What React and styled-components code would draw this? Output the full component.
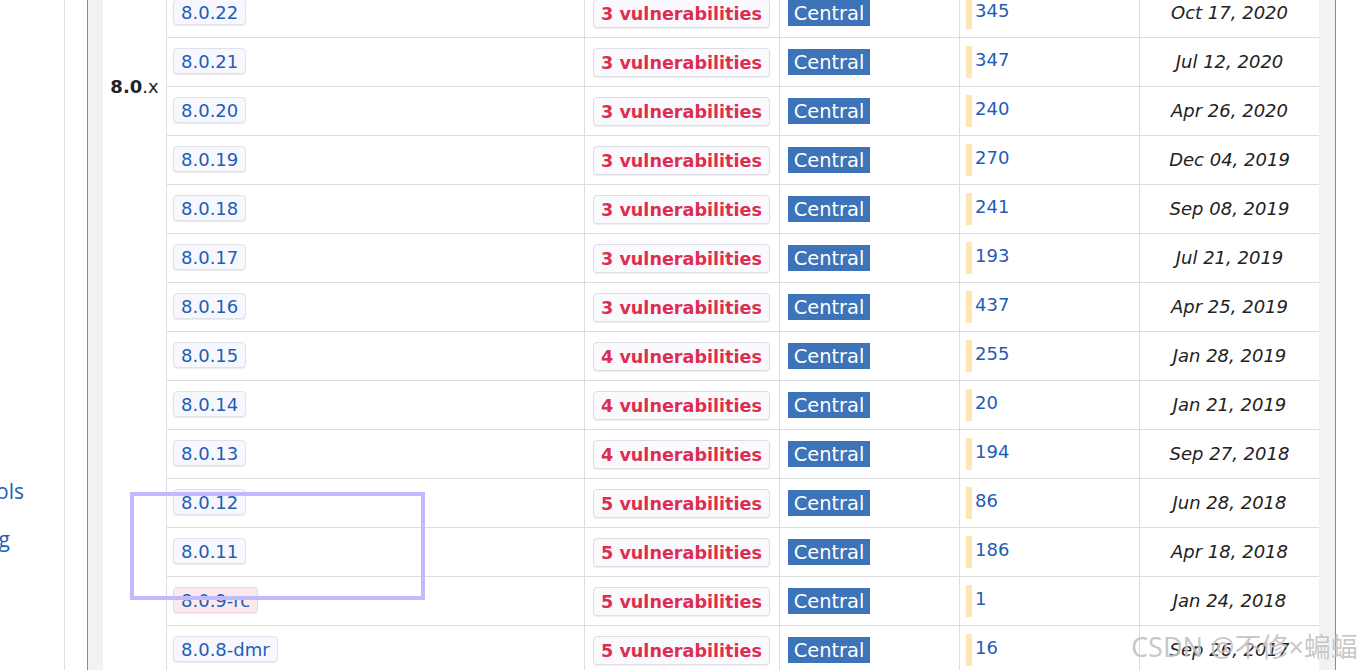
import React from "react";
import styled, { createGlobalStyle } from "styled-components";

const Global = createGlobalStyle`
  html, body { margin: 0; padding: 0; background: #fff; overflow: hidden; }
  body { font-family: "DejaVu Sans", Verdana, sans-serif; }
`;

const Page = styled.div`
  position: relative;
  display: flex;
  width: 1357px;
  height: 670px;
  overflow: hidden;
`;

const Sidebar = styled.nav`
  width: 64px;
  flex: none;
  border-right: 1px solid #e2e2e2;
  overflow: hidden;
  padding-top: 478px;
  display: flex;
  flex-direction: column;
  gap: 22px;
`;

const SideLink = styled.a`
  display: flex;
  justify-content: flex-end;
  width: ${(p) => p.$edge}px;
  white-space: nowrap;
  font-family: "Open Sans", "Noto Sans", sans-serif;
  font-size: 21px;
  line-height: 26px;
  color: #1f5db6;
  text-decoration: none;
`;

const Main = styled.main`
  margin-left: 22px;
  flex: none;
  background: #f2f2f2;
  border-left: 1px solid #8a8a8a;
  border-right: 1px solid #8a8a8a;
  padding: 0 16px 0 15px;
`;

const Grid = styled.div`
  margin-top: -11px;
  display: grid;
  grid-template-columns: 63px 418px 195px 180px 180px 180px;
  grid-auto-rows: 49px;
  background: #fff;
`;

const GroupLabel = styled.div`
  grid-column: 1;
  grid-row: 1 / span 15;
  text-align: center;
  padding-top: 87px;
  font-size: 18px;
  line-height: 22px;
  color: #222;
  b { font-weight: bold; }
`;

const Cell = styled.div`
  box-sizing: border-box;
  border-left: 1px solid #dddddd;
  border-bottom: 1px solid #dddddd;
  display: flex;
  align-items: center;
  padding-left: ${(p) => p.$pad ?? 8}px;
  justify-content: ${(p) => (p.$center ? "center" : "flex-start")};
`;

const VersionBadge = styled.a`
  box-sizing: border-box;
  height: 26px;
  margin-top: -3px;
  padding: 1px 7px 0 7px;
  display: flex;
  align-items: center;
  border: 1px solid ${(p) => (p.$pre ? "#ecd9dd" : "#dfe2ea")};
  border-radius: 4px;
  background: ${(p) => (p.$pre ? "#fbe9ec" : "#f7f8fe")};
  box-shadow: 0 1px 1px rgba(0, 0, 0, 0.08);
  color: #1f5db6;
  font-size: 18px;
  text-decoration: none;
`;

const VulnBadge = styled.a`
  box-sizing: border-box;
  height: 29px;
  padding: 1px 7px 0;
  display: flex;
  align-items: center;
  border: 1px solid #dedde4;
  border-radius: 4px;
  background: #faf9fd;
  box-shadow: 0 1px 1px rgba(0, 0, 0, 0.07);
  color: #dc2e50;
  font-weight: bold;
  font-size: 17.6px;
  text-decoration: none;
`;

const RepoTag = styled.span`
  height: 26px;
  width: 82px;
  box-sizing: border-box;
  display: flex;
  align-items: center;
  justify-content: center;
  background: #3d73b8;
  color: #fff;
  font-size: 19.4px;
`;

const Usage = styled.div`
  display: flex;
  align-items: flex-start;
  gap: 3px;
`;

const UsageBar = styled.span`
  width: 6px;
  height: 32px;
  background: #ffe5b2;
`;

const UsageCount = styled.a`
  font-size: 18px;
  line-height: 20px;
  padding-top: 6px;
  margin-top: -2px;
  color: #1f5db6;
  text-decoration: none;
`;

const DateText = styled.span`
  font-size: 18px;
  font-style: italic;
  color: #222;
  margin-top: -1px;
`;

const Highlight = styled.div`
  position: absolute;
  left: 130px;
  top: 492px;
  width: 295px;
  height: 108px;
  box-sizing: border-box;
  border: 4px solid #c2baff;
  pointer-events: none;
`;

const Watermark = styled.div`
  position: absolute;
  left: 1131px;
  top: 626px;
  white-space: nowrap;
  font-family: "Noto Sans", "Noto Sans CJK SC", sans-serif;
  font-size: 27px;
  color: rgba(130, 130, 130, 0.45);
  text-shadow: 0 0 1px rgba(255, 255, 255, 0.9);
  pointer-events: none;
`;

const rows = [
  ["8.0.22", 3, 345, "Oct 17, 2020"],
  ["8.0.21", 3, 347, "Jul 12, 2020"],
  ["8.0.20", 3, 240, "Apr 26, 2020"],
  ["8.0.19", 3, 270, "Dec 04, 2019"],
  ["8.0.18", 3, 241, "Sep 08, 2019"],
  ["8.0.17", 3, 193, "Jul 21, 2019"],
  ["8.0.16", 3, 437, "Apr 25, 2019"],
  ["8.0.15", 4, 255, "Jan 28, 2019"],
  ["8.0.14", 4, 20, "Jan 21, 2019"],
  ["8.0.13", 4, 194, "Sep 27, 2018"],
  ["8.0.12", 5, 86, "Jun 28, 2018"],
  ["8.0.11", 5, 186, "Apr 18, 2018"],
  ["8.0.9-rc", 5, 1, "Jan 24, 2018", true],
  ["8.0.8-dmr", 5, 16, "Sep 26, 2017"],
];

export default function App() {
  return (
    <>
      <Global />
      <Page>
        <Sidebar>
          <SideLink $edge={24}>Build Tools</SideLink>
          <SideLink $edge={10}>Logging</SideLink>
        </Sidebar>
        <Main>
          <Grid>
            <GroupLabel>
              <b>8.0</b>.x
            </GroupLabel>
            {rows.map(([v, n, u, d, pre]) => (
              <React.Fragment key={v}>
                <Cell $pad={6}>
                  <VersionBadge $pre={pre}>{v}</VersionBadge>
                </Cell>
                <Cell $pad={8}>
                  <VulnBadge>{n} vulnerabilities</VulnBadge>
                </Cell>
                <Cell $pad={8}>
                  <RepoTag>Central</RepoTag>
                </Cell>
                <Cell $pad={6}>
                  <Usage>
                    <UsageBar />
                    <UsageCount>{u}</UsageCount>
                  </Usage>
                </Cell>
                <Cell $pad={0} $center>
                  <DateText>{d}</DateText>
                </Cell>
              </React.Fragment>
            ))}
          </Grid>
        </Main>
        <Highlight />
        <Watermark>CSDN @不修×蝙蝠</Watermark>
      </Page>
    </>
  );
}
